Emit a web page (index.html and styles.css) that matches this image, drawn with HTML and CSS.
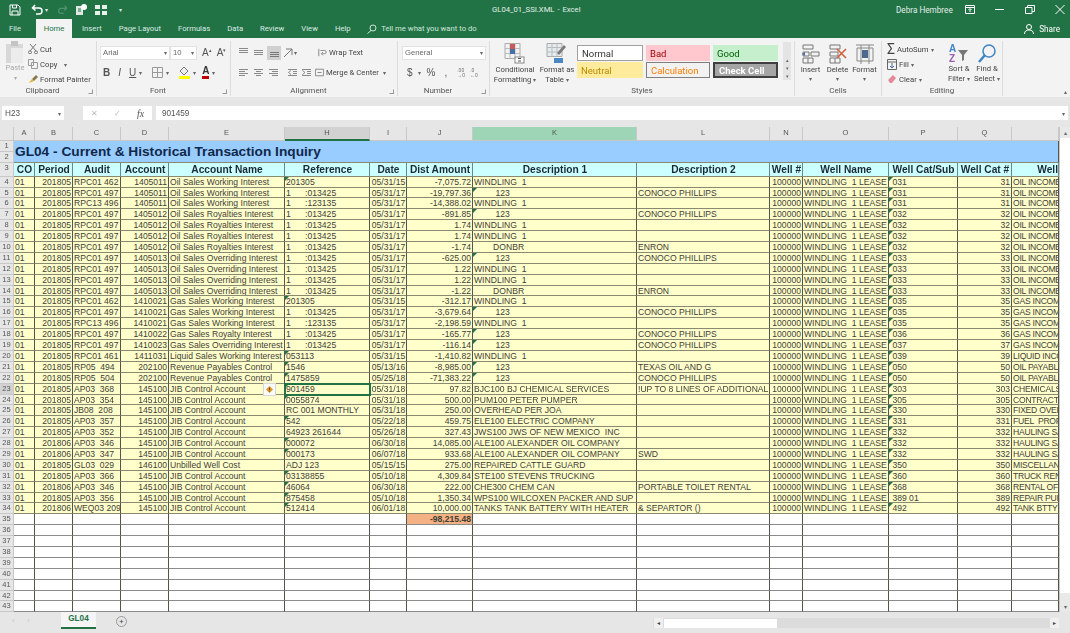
FILE: index.html
```html
<!DOCTYPE html>
<html lang="en">
<head>
    <meta charset="UTF-8">
    <title>GL04_01_SSI.XML - Excel</title>
    <link rel="stylesheet" href="styles.css">
</head>
<body>
<div class="app">

    <!-- Title bar -->
    <header class="titlebar">
        <div class="qat">
            <svg width="12" height="12" viewBox="0 0 12 12" fill="none" stroke="#fff"><path d="M1 1h8l2 2v8H1zM3.500 1v3h4V1M3 11V7h6v4"/></svg>
            <svg class="undo" width="14" height="12" viewBox="0 0 14 12" fill="none" stroke="#fff" stroke-width="1.500"><path d="M4 1L1.500 4 4.500 6.500M2 4h6a3 3 0 0 1 0 6H5"/></svg>
            <span class="caret white">▾</span>
            <svg class="redo" width="12" height="12" viewBox="0 0 14 12" fill="none" stroke="#4f8f6d" stroke-width="1.500"><path d="M10 1l2.500 3-3 2.500M12 4H6a3 3 0 0 0 0 6h3"/></svg>
            <svg class="qat-a" width="13" height="13" viewBox="0 0 13 13"><rect x="1" y="3" width="7" height="9" fill="#dfe9e3"/><circle cx="9" cy="4" r="3" fill="#fff"/><path d="M3 6h3M3 8h3" stroke="#217346"/></svg>
            <svg class="qat-b" width="12" height="10" viewBox="0 0 12 10"><path d="M0 0h5v4H0zM7 0h5v4H7zM0 6h5v4H0zM7 6h5v4H7z" fill="#e8f0eb"/></svg>
            <span class="caret white">▾</span>
        </div>
        <div class="doc-title">GL04_01_SSI.XML - Excel</div>
        <div class="account">Debra Hembree</div>
        <div class="win-controls">
            <svg width="10" height="9" viewBox="0 0 10 9" fill="none" stroke="#fff"><path d="M.5.500h9v8h-9zM.5 2.500h9"/><path d="M5 7V4M3.500 5L5 3.500 6.500 5"/></svg>
            <svg width="10" height="9" viewBox="0 0 10 9" stroke="#fff"><path d="M0 4.500h9"/></svg>
            <svg width="10" height="9" viewBox="0 0 10 9" fill="none" stroke="#fff"><path d="M.5 2.500h6.500v6H.5zM2.500 2.500v-2h7v6H7"/></svg>
            <svg width="10" height="9" viewBox="0 0 10 9" stroke="#fff"><path d="M.5 0l9 9M9.500 0l-9 9"/></svg>
        </div>
    </header>

    <!-- Ribbon tabs -->
    <nav class="tabs">
        <span class="tab file">File</span>
        <span class="tab active">Home</span>
        <span class="tab first">Insert</span>
        <span class="tab">Page Layout</span>
        <span class="tab">Formulas</span>
        <span class="tab">Data</span>
        <span class="tab">Review</span>
        <span class="tab">View</span>
        <span class="tab">Help</span>
        <span class="tell">
            <svg width="10" height="10" viewBox="0 0 10 10" fill="none" stroke="#cfe6d8"><circle cx="6" cy="4" r="3"/><path d="M4 6.500L.5 9.500"/></svg>
            Tell me what you want to do
        </span>
        <span class="share">
            <svg width="11" height="10" viewBox="0 0 11 10" fill="none" stroke="#fff"><circle cx="5" cy="3" r="2.500"/><path d="M.5 10c0-3 2-4 4.500-4s4.500 1 4.500 4"/></svg>
            Share
        </span>
    </nav>

    <!-- Ribbon -->
    <div class="ribbon">
        <section class="group clipboard">
            <div class="group-body">
                <div class="paste">
                    <svg width="20" height="22" viewBox="0 0 20 22"><rect x="1" y="3" width="17" height="19" fill="#d8d8d8"/><rect x="6" y="0" width="7" height="5" fill="#c4c4c4"/><rect x="6" y="7" width="12" height="15" fill="#ececec"/></svg>
                    <span>Paste</span>
                    <span class="caret dim">▾</span>
                </div>
                <div class="small-stack">
                    <div class="small-btn">
                        <svg width="10" height="10" viewBox="0 0 10 10" fill="none" stroke="#777"><path d="M2 0l6 7M8 0L2 7"/><circle cx="2" cy="8.300" r="1.500"/><circle cx="8" cy="8.300" r="1.500"/></svg>
                        Cut
                    </div>
                    <div class="small-btn">
                        <svg width="10" height="10" viewBox="0 0 10 10" fill="none" stroke="#9a9a9a"><path d="M.5.500h5v6h-5zM3.500 3.500h6v6h-6z"/></svg>
                        Copy <span class="caret copy-caret">▾</span>
                    </div>
                    <div class="small-btn">
                        <svg width="10" height="10" viewBox="0 0 10 10"><path d="M4 5l4-4 2 2-4 4z" fill="#8a7a4a"/><path d="M1 9l3-4 2 2z" fill="#e0b030"/></svg>
                        Format Painter
                    </div>
                </div>
            </div>
            <div class="group-label">Clipboard <i class="launcher"></i></div>
        </section>

        <section class="group font">
            <div class="group-body col">
                <div class="tool-row">
                    <span class="select font-name">Arial<span class="caret">▾</span></span>
                    <span class="select font-size">10<span class="caret">▾</span></span>
                    <span class="glyph grow">A<sup>▴</sup></span>
                    <span class="glyph grow">A<sup>▾</sup></span>
                </div>
                <div class="tool-row fmt">
                    <b class="glyph">B</b>
                    <i class="glyph">I</i>
                    <u class="glyph">U</u>
                    <span class="caret">▾</span>
                    <svg class="borders" width="11" height="11" viewBox="0 0 11 11" fill="none" stroke="#999"><path d="M.5.500h10v10H.5zM5.500.500v10M.5 5.500h10"/></svg>
                    <span class="caret">▾</span>
                    <svg class="fill" width="13" height="13" viewBox="0 0 13 13"><path d="M6 1l4 4-4 4-4-4z" fill="#eee" stroke="#777"/><rect x="1" y="10" width="11" height="3" fill="#ffff00"/></svg>
                    <span class="caret">▾</span>
                    <span class="font-color">A</span>
                    <span class="caret">▾</span>
                </div>
            </div>
            <div class="group-label">Font <i class="launcher"></i></div>
        </section>

        <section class="group alignment">
            <div class="group-body col">
                <div class="tool-row">
                    <svg class="al" width="11" height="11" viewBox="0 0 11 11" stroke="#8a8a8a"><path d="M1 1.500h9M1 3.500h9M1 5.500h9"/></svg>
                    <svg class="al" width="11" height="11" viewBox="0 0 11 11" stroke="#8a8a8a"><path d="M1 3.500h9M1 5.500h9M1 7.500h9"/></svg>
                    <span class="al-on"><svg width="11" height="11" viewBox="0 0 11 11" stroke="#777"><path d="M1 5.500h9M1 7.500h9M1 9.500h9"/></svg></span>
                    <svg class="orient" width="11" height="11" viewBox="0 0 11 11" fill="none" stroke="#777"><path d="M1 10L9 2M3 2h6v6"/></svg>
                    <span class="caret">▾</span>
                    <span class="small-btn wrap">
                        <svg width="9" height="11" viewBox="0 0 11 11" fill="none" stroke="#777"><path d="M1 1v9M3 3h5a2 2 0 0 1 0 4H5M6 5L4 7l2 2"/></svg>
                        Wrap Text
                    </span>
                </div>
                <div class="tool-row">
                    <svg class="al" width="11" height="11" viewBox="0 0 11 11" stroke="#8a8a8a"><path d="M1 2.500h9M1 4.500h6M1 6.500h9M1 8.500h6"/></svg>
                    <svg class="al" width="11" height="11" viewBox="0 0 11 11" stroke="#8a8a8a"><path d="M1 2.500h9M3 4.500h5M1 6.500h9M3 8.500h5"/></svg>
                    <svg class="al al-last" width="11" height="11" viewBox="0 0 11 11" stroke="#8a8a8a"><path d="M1 2.500h9M4 4.500h6M1 6.500h9M4 8.500h6"/></svg>
                    <svg class="indent" width="11" height="11" viewBox="0 0 11 11" fill="none" stroke="#8a8a8a"><path d="M1 2.500h9M6 4.500h4M6 6.500h4M1 8.500h9M4 3.500L1.500 5.500 4 7.500" /></svg>
                    <svg class="indent" width="11" height="11" viewBox="0 0 11 11" fill="none" stroke="#8a8a8a"><path d="M1 2.500h9M6 4.500h4M6 6.500h4M1 8.500h9M1.500 3.500L4 5.500 1.500 7.500"/></svg>
                    <span class="small-btn merge">
                        <svg width="9" height="11" viewBox="0 0 11 11" fill="none" stroke="#777"><path d="M.5 1.500h10v8H.5zM3 5.500h5"/></svg>
                        Merge &amp; Center
                    </span>
                    <span class="caret">▾</span>
                </div>
            </div>
            <div class="group-label">Alignment <i class="launcher"></i></div>
        </section>

        <section class="group number">
            <div class="group-body col">
                <div class="tool-row">
                    <span class="select num-format">General<span class="caret">▾</span></span>
                </div>
                <div class="tool-row num-tools">
                    <span class="glyph">$</span><span class="caret">▾</span>
                    <span class="glyph">%</span>
                    <span class="glyph comma">,</span>
                    <span class="dec">.00<br>→0</span>
                    <span class="dec">.0<br>←0</span>
                </div>
            </div>
            <div class="group-label">Number <i class="launcher"></i></div>
        </section>

        <section class="group styles">
            <div class="group-body">
                <div class="big-btn cond">
                    <svg width="22" height="21" viewBox="0 0 22 21" fill="none"><path d="M1 .500h15v15H1z" stroke="#aaa"/><path d="M1 5.500h15M1 10.500h15M6 .500v15M11 .500v15" stroke="#bbb"/><rect x="6" y="1" width="5" height="5" fill="#c65a5a"/><rect x="6" y="6" width="5" height="5" fill="#4a6fa5"/><rect x="11" y="14" width="9" height="6" fill="#fff" stroke="#888"/><path d="M14 15.500h3M14 18h3" stroke="#555"/></svg>
                    <span>Conditional<br>Formatting <span class="caret">▾</span></span>
                </div>
                <div class="big-btn as-table">
                    <svg width="22" height="21" viewBox="0 0 22 21" fill="none"><path d="M1 .500h15v13H1z" stroke="#aaa" fill="#e4ecf2"/><path d="M1 4.500h15M1 9h15M6 .500v13M11 .500v13" stroke="#bbb"/><path d="M20 4l-7 8-2-2 7-8z" fill="#7a7a7a"/><path d="M8 15h9v5H8z" fill="#4a88c5"/></svg>
                    <span>Format as<br>Table <span class="caret">▾</span></span>
                </div>
                <div class="gallery">
                    <span class="cell-style normal">Normal</span>
                    <span class="cell-style bad">Bad</span>
                    <span class="cell-style good">Good</span>
                    <span class="cell-style neutral">Neutral</span>
                    <span class="cell-style calc">Calculation</span>
                    <span class="cell-style check">Check Cell</span>
                </div>
                <div class="gallery-scroll"><span>▴</span><span>▾</span><span>▾</span></div>
            </div>
            <div class="group-label">Styles</div>
        </section>

        <section class="group cells">
            <div class="group-body">
                <div class="big-btn cell-btn">
                    <svg width="20" height="20" viewBox="0 0 20 20" fill="none" stroke="#777"><path d="M2 1h10v4H2zM2 14h10v5H2zM7 14v5M2 8h6v4H2zM10 8h8v4h-8z"/><path d="M1 10l3-2v4z" fill="#4a6fa5" stroke="none"/></svg>
                    <span>Insert</span><span class="caret">▾</span>
                </div>
                <div class="big-btn cell-btn">
                    <svg width="20" height="20" viewBox="0 0 20 20" fill="none" stroke="#777"><path d="M2 1h10v4H2zM2 14h10v5H2zM7 14v5M2 8h8v4H2z"/><path d="M9 5l9 9M18 5l-9 9" stroke="#d2603a" stroke-width="1.600"/></svg>
                    <span>Delete</span><span class="caret">▾</span>
                </div>
                <div class="big-btn cell-btn">
                    <svg width="20" height="20" viewBox="0 0 20 20" fill="none" stroke="#888"><path d="M2 4h16v13H2zM6 1v19M14 1v19M1 1h18"/><rect x="7" y="6" width="6" height="8" fill="#4a6a90" stroke="none"/></svg>
                    <span>Format</span><span class="caret">▾</span>
                </div>
            </div>
            <div class="group-label">Cells</div>
        </section>

        <section class="group editing">
            <div class="group-body">
                <div class="small-stack edit-stack">
                    <div class="small-btn"><span class="sigma">Σ</span> AutoSum <span class="caret">▾</span></div>
                    <div class="small-btn">
                        <svg width="10" height="11" viewBox="0 0 10 11" fill="none" stroke="#666"><path d="M.5.500h9v10h-9zM.5 3h9"/><path d="M5 4v5M3 7l2 2 2-2" stroke="#4a6fa5"/></svg>
                        Fill <span class="caret">▾</span>
                    </div>
                    <div class="small-btn">
                        <svg width="10" height="10" viewBox="0 0 10 10"><path d="M1 6l5-5 3 3-4 5H3z" fill="#e58a9a"/></svg>
                        Clear <span class="caret">▾</span>
                    </div>
                </div>
                <div class="big-btn edit-btn">
                    <svg width="20" height="20" viewBox="0 0 20 20"><path d="M9 7l10 0-4 5v5l-2 1v-6z" fill="#777"/><text x="0" y="9" class="az-a">A</text><text x="0" y="19" class="az-z">Z</text></svg>
                    <span>Sort &amp;<br>Filter <span class="caret">▾</span></span>
                </div>
                <div class="big-btn edit-btn">
                    <svg width="20" height="20" viewBox="0 0 20 20" fill="none" stroke="#3f86c4" stroke-width="1.500"><circle cx="12" cy="8" r="6"/><path d="M8 12l-6 7" stroke-width="2.500"/></svg>
                    <span>Find &amp;<br>Select <span class="caret">▾</span></span>
                </div>
            </div>
            <div class="group-label">Editing</div>
        </section>

        <div class="collapse"><span class="caret">▴</span></div>
    </div>

    <!-- Formula bar -->
    <div class="formula-bar">
        <div class="name-box">H23<span class="caret">▾</span></div>
        <span class="grip"></span>
        <div class="fx-buttons">
            <span class="fx-x">✕</span><span class="fx-x">✓</span><span class="fx">fx</span>
        </div>
        <div class="formula-input">901459<span class="caret">▾</span></div>
    </div>

    <!-- Sheet -->
    <div class="sheet-area">
        <table class="sheet">
            <tr class="cols"><th class="corner"></th><th>A</th><th>B</th><th>C</th><th>D</th><th>E</th><th class="col-sel">H</th><th>I</th><th>J</th><th class="col-green">K</th><th>L</th><th>N</th><th>O</th><th>P</th><th>Q</th><th></th></tr>
            <tr><th class="row-h">1</th><td class="title">GL04 - Current &amp; Historical Transaction Inquiry</td></tr>
            <tr><th class="row-h">2</th></tr>
            <tr class="heads"><th class="row-h">3</th><td>CO</td><td>Period</td><td>Audit</td><td>Account</td><td>Account Name</td><td>Reference</td><td>Date</td><td>Dist Amount</td><td>Description 1</td><td>Description 2</td><td>Well #</td><td>Well Name</td><td>Well Cat/Sub</td><td>Well Cat #</td><td class="r">Well</td></tr>
            <tr class="d"><th>4<td>01<td class=r>201805<td>RPC01 462<td class=r>1405011<td>Oil Sales Working Interest<td class=t>201305<td class=c>05/31/15<td class=r>-7,075.72<td>WINDLING  1<td><td class=r>100000<td>WINDLING  1 LEASE<td class=t> 031<td class=r>31<td>OIL INCOME</tr>
            <tr class="d"><th>5<td>01<td class=r>201805<td>RPC01 497<td class=r>1405011<td>Oil Sales Working Interest<td>1      :013425<td class=c>05/31/17<td class=r>-19,797.36<td class=t>         123<td>CONOCO PHILLIPS<td class=r>100000<td>WINDLING  1 LEASE<td class=t> 031<td class=r>31<td>OIL INCOME</tr>
            <tr class="d"><th>6<td>01<td class=r>201805<td>RPC13 496<td class=r>1405011<td>Oil Sales Working Interest<td>1      :123135<td class=c>05/31/17<td class=r>-14,388.02<td>WINDLING  1<td><td class=r>100000<td>WINDLING  1 LEASE<td class=t> 031<td class=r>31<td>OIL INCOME</tr>
            <tr class="d"><th>7<td>01<td class=r>201805<td>RPC01 497<td class=r>1405012<td>Oil Sales Royalties Interest<td>1      :013425<td class=c>05/31/17<td class=r>-891.85<td class=t>         123<td>CONOCO PHILLIPS<td class=r>100000<td>WINDLING  1 LEASE<td class=t> 032<td class=r>32<td>OIL INCOME</tr>
            <tr class="d"><th>8<td>01<td class=r>201805<td>RPC01 497<td class=r>1405012<td>Oil Sales Royalties Interest<td>1      :013425<td class=c>05/31/17<td class=r>1.74<td>WINDLING  1<td><td class=r>100000<td>WINDLING  1 LEASE<td class=t> 032<td class=r>32<td>OIL INCOME</tr>
            <tr class="d"><th>9<td>01<td class=r>201805<td>RPC01 497<td class=r>1405012<td>Oil Sales Royalties Interest<td>1      :013425<td class=c>05/31/17<td class=r>1.74<td>WINDLING  1<td><td class=r>100000<td>WINDLING  1 LEASE<td class=t> 032<td class=r>32<td>OIL INCOME</tr>
            <tr class="d"><th>10<td>01<td class=r>201805<td>RPC01 497<td class=r>1405012<td>Oil Sales Royalties Interest<td>1      :013425<td class=c>05/31/17<td class=r>-1.74<td>        DONBR<td>ENRON<td class=r>100000<td>WINDLING  1 LEASE<td class=t> 032<td class=r>32<td>OIL INCOME</tr>
            <tr class="d"><th>11<td>01<td class=r>201805<td>RPC01 497<td class=r>1405013<td>Oil Sales Overriding Interest<td>1      :013425<td class=c>05/31/17<td class=r>-625.00<td class=t>         123<td>CONOCO PHILLIPS<td class=r>100000<td>WINDLING  1 LEASE<td class=t> 033<td class=r>33<td>OIL INCOME</tr>
            <tr class="d"><th>12<td>01<td class=r>201805<td>RPC01 497<td class=r>1405013<td>Oil Sales Overriding Interest<td>1      :013425<td class=c>05/31/17<td class=r>1.22<td>WINDLING  1<td><td class=r>100000<td>WINDLING  1 LEASE<td class=t> 033<td class=r>33<td>OIL INCOME</tr>
            <tr class="d"><th>13<td>01<td class=r>201805<td>RPC01 497<td class=r>1405013<td>Oil Sales Overriding Interest<td>1      :013425<td class=c>05/31/17<td class=r>1.22<td>WINDLING  1<td><td class=r>100000<td>WINDLING  1 LEASE<td class=t> 033<td class=r>33<td>OIL INCOME</tr>
            <tr class="d"><th>14<td>01<td class=r>201805<td>RPC01 497<td class=r>1405013<td>Oil Sales Overriding Interest<td>1      :013425<td class=c>05/31/17<td class=r>-1.22<td>        DONBR<td>ENRON<td class=r>100000<td>WINDLING  1 LEASE<td class=t> 033<td class=r>33<td>OIL INCOME</tr>
            <tr class="d"><th>15<td>01<td class=r>201805<td>RPC01 462<td class=r>1410021<td>Gas Sales Working Interest<td class=t>201305<td class=c>05/31/15<td class=r>-312.17<td>WINDLING  1<td><td class=r>100000<td>WINDLING  1 LEASE<td class=t> 035<td class=r>35<td>GAS INCOM</tr>
            <tr class="d"><th>16<td>01<td class=r>201805<td>RPC01 497<td class=r>1410021<td>Gas Sales Working Interest<td>1      :013425<td class=c>05/31/17<td class=r>-3,679.64<td class=t>         123<td>CONOCO PHILLIPS<td class=r>100000<td>WINDLING  1 LEASE<td class=t> 035<td class=r>35<td>GAS INCOM</tr>
            <tr class="d"><th>17<td>01<td class=r>201805<td>RPC13 496<td class=r>1410021<td>Gas Sales Working Interest<td>1      :123135<td class=c>05/31/17<td class=r>-2,198.59<td>WINDLING  1<td><td class=r>100000<td>WINDLING  1 LEASE<td class=t> 035<td class=r>35<td>GAS INCOM</tr>
            <tr class="d"><th>18<td>01<td class=r>201805<td>RPC01 497<td class=r>1410022<td>Gas Sales Royalty Interest<td>1      :013425<td class=c>05/31/17<td class=r>-165.77<td class=t>         123<td>CONOCO PHILLIPS<td class=r>100000<td>WINDLING  1 LEASE<td class=t> 036<td class=r>36<td>GAS INCOM</tr>
            <tr class="d"><th>19<td>01<td class=r>201805<td>RPC01 497<td class=r>1410023<td>Gas Sales Overriding Interest<td>1      :013425<td class=c>05/31/17<td class=r>-116.14<td class=t>         123<td>CONOCO PHILLIPS<td class=r>100000<td>WINDLING  1 LEASE<td class=t> 037<td class=r>37<td>GAS INCOM</tr>
            <tr class="d"><th>20<td>01<td class=r>201805<td>RPC01 461<td class=r>1411031<td>Liquid Sales Working Interest<td class=t>053113<td class=c>05/31/15<td class=r>-1,410.82<td>WINDLING  1<td><td class=r>100000<td>WINDLING  1 LEASE<td class=t> 039<td class=r>39<td>LIQUID INCO</tr>
            <tr class="d"><th>21<td>01<td class=r>201805<td>RP05  494<td class=r>202100<td>Revenue Payables Control<td class=t>1546<td class=c>05/13/16<td class=r>-8,985.00<td class=t>         123<td>TEXAS OIL AND G<td class=r>100000<td>WINDLING  1 LEASE<td class=t> 050<td class=r>50<td>OIL PAYABL</tr>
            <tr class="d"><th>22<td>01<td class=r>201805<td>RP05  504<td class=r>202100<td>Revenue Payables Control<td class=t>1475859<td class=c>05/25/18<td class=r>-71,383.22<td class=t>         123<td>CONOCO PHILLIPS<td class=r>100000<td>WINDLING  1 LEASE<td class=t> 050<td class=r>50<td>OIL PAYABL</tr>
            <tr class="d sel-row"><th>23<td>01<td class=r>201805<td>AP03  368<td class=r>145100<td class=warn-cell>JIB Control Account<span class="warn"><svg width="7" height="7" viewBox="0 0 7 7"><path d="M3.500 0L7 3.500 3.500 7 0 3.500z" fill="#d99a2b"/><path d="M3.500 1.500v2.500M3.500 4.800v.8" stroke="#7a4a10"/></svg></span><td class="t selected">901459<td class=c>05/31/18<td class=r>97.82<td>BJC100 BJ CHEMICAL SERVICES<td>!UP TO 8 LINES OF ADDITIONAL<td class=r>100000<td>WINDLING  1 LEASE<td class=t> 303<td class=r>303<td>CHEMICALS</tr>
            <tr class="d"><th>24<td>01<td class=r>201805<td>AP03  354<td class=r>145100<td>JIB Control Account<td class=t>0055874<td class=c>05/31/18<td class=r>500.00<td>PUM100 PETER PUMPER<td><td class=r>100000<td>WINDLING  1 LEASE<td class=t> 305<td class=r>305<td>CONTRACT</tr>
            <tr class="d"><th>25<td>01<td class=r>201805<td>JB08  208<td class=r>145100<td>JIB Control Account<td>RC 001 MONTHLY<td class=c>05/31/18<td class=r>250.00<td>OVERHEAD PER JOA<td><td class=r>100000<td>WINDLING  1 LEASE<td class=t> 330<td class=r>330<td>FIXED OVER</tr>
            <tr class="d"><th>26<td>01<td class=r>201805<td>AP03  357<td class=r>145100<td>JIB Control Account<td class=t>542<td class=c>05/22/18<td class=r>459.75<td>ELE100 ELECTRIC COMPANY<td><td class=r>100000<td>WINDLING  1 LEASE<td class=t> 331<td class=r>331<td>FUEL  PROF</tr>
            <tr class="d"><th>27<td>01<td class=r>201805<td>AP03  352<td class=r>145100<td>JIB Control Account<td>64923 261644<td class=c>05/26/18<td class=r>327.43<td>JWS100 JWS OF NEW MEXICO  INC<td><td class=r>100000<td>WINDLING  1 LEASE<td class=t> 332<td class=r>332<td>HAULING SA</tr>
            <tr class="d"><th>28<td>01<td class=r>201806<td>AP03  346<td class=r>145100<td>JIB Control Account<td class=t>000072<td class=c>06/30/18<td class=r>14,085.00<td>ALE100 ALEXANDER OIL COMPANY<td><td class=r>100000<td>WINDLING  1 LEASE<td class=t> 332<td class=r>332<td>HAULING SA</tr>
            <tr class="d"><th>29<td>01<td class=r>201806<td>AP03  347<td class=r>145100<td>JIB Control Account<td class=t>000173<td class=c>06/07/18<td class=r>933.68<td>ALE100 ALEXANDER OIL COMPANY<td>SWD<td class=r>100000<td>WINDLING  1 LEASE<td class=t> 332<td class=r>332<td>HAULING SA</tr>
            <tr class="d"><th>30<td>01<td class=r>201805<td>GL03  029<td class=r>146100<td>Unbilled Well Cost<td>ADJ 123<td class=c>05/15/15<td class=r>275.00<td>REPAIRED CATTLE GUARD<td><td class=r>100000<td>WINDLING  1 LEASE<td class=t> 350<td class=r>350<td>MISCELLAN</tr>
            <tr class="d"><th>31<td>01<td class=r>201805<td>AP03  366<td class=r>145100<td>JIB Control Account<td class=t>03138855<td class=c>05/10/18<td class=r>4,309.84<td>STE100 STEVENS TRUCKING<td><td class=r>100000<td>WINDLING  1 LEASE<td class=t> 360<td class=r>360<td>TRUCK REN</tr>
            <tr class="d"><th>32<td>01<td class=r>201806<td>AP03  346<td class=r>145100<td>JIB Control Account<td class=t>46064<td class=c>06/30/18<td class=r>222.00<td>CHE300 CHEM CAN<td>PORTABLE TOILET RENTAL<td class=r>100000<td>WINDLING  1 LEASE<td class=t> 368<td class=r>368<td>RENTAL OF</tr>
            <tr class="d"><th>33<td>01<td class=r>201805<td>AP03  356<td class=r>145100<td>JIB Control Account<td class=t>875458<td class=c>05/10/18<td class=r>1,350.34<td>WPS100 WILCOXEN PACKER AND SUP<td><td class=r>100000<td>WINDLING  1 LEASE<td> 389 01<td class=r>389<td>REPAIR PUI</tr>
            <tr class="d"><th>34<td>01<td class=r>201806<td>WEQ03 209<td class=r>145100<td>JIB Control Account<td class=t>512414<td class=c>06/01/18<td class=r>10,000.00<td>TANKS TANK BATTERY WITH HEATER<td>&amp; SEPARTOR ()<td class=r>100000<td>WINDLING  1 LEASE<td class=t> 492<td class=r>492<td>TANK BTTY</tr>
            <tr class="e"><th>35<td><td><td><td><td><td><td><td class="total r">-98,215.48<td><td><td><td><td><td><td></tr>
            <tr class="e"><th>36<td><td><td><td><td><td><td><td><td><td><td><td><td><td><td></tr>
            <tr class="e"><th>37<td><td><td><td><td><td><td><td><td><td><td><td><td><td><td></tr>
            <tr class="e"><th>38<td><td><td><td><td><td><td><td><td><td><td><td><td><td><td></tr>
            <tr class="e"><th>39<td><td><td><td><td><td><td><td><td><td><td><td><td><td><td></tr>
            <tr class="e"><th>40<td><td><td><td><td><td><td><td><td><td><td><td><td><td><td></tr>
            <tr class="e"><th>41<td><td><td><td><td><td><td><td><td><td><td><td><td><td><td></tr>
            <tr class="e"><th>42<td><td><td><td><td><td><td><td><td><td><td><td><td><td><td></tr>
            <tr class="e"><th>43<td><td><td><td><td><td><td><td><td><td><td><td><td><td><td></tr>
        </table>
        <div class="v-scroll">
            <span class="caret">▴</span>
            <div class="v-thumb"></div>
            <span class="caret">▾</span>
        </div>
    </div>

    <!-- Sheet tabs -->
    <footer class="sheet-tabs">
        <span class="nav-arrows"><span>‹</span><span>›</span></span>
        <span class="sheet-tab">GL04</span>
        <span class="add-sheet">+</span>
        <div class="h-scroll">
            <span class="arrow">◂</span>
            <span class="h-thumb"></span>
            <span class="arrow end">▸</span>
        </div>
    </footer>
</div>
</body>
</html>
```

FILE: styles.css
```css
* {
    box-sizing: border-box;
}

body {
    margin: 0;
    font-family: Roboto, "Open Sans", sans-serif;
    font-size: 7.700px;
    color: #444;
    background: #e6e6e6;
}

.app {
    width: 1070px;
    height: 633px;
    overflow: hidden;
    display: flex;
    flex-direction: column;
    filter: blur(.35px);
}

.caret {
    font-size: 6px;
    color: #666;
}

.caret.white {
    color: #dfe9e3;
}

.caret.dim {
    color: #aaa;
}

/* Title bar */
.titlebar {
    height: 19px;
    flex: none;
    background: #217346;
    color: #e3eee8;
    display: flex;
    align-items: center;
}

.qat {
    display: flex;
    align-items: center;
    padding-left: 9px;
    width: 300px;
}

.undo {
    margin-left: 10px;
}

.redo {
    margin-left: 8px;
}

.qat-a {
    margin-left: 7px;
}

.qat-b {
    margin-left: 7px;
}

.qat .caret:last-child {
    margin-left: 12px;
}

.doc-title {
    margin-left: 192px;
    width: 404px;
    white-space: nowrap;
    word-spacing: 1px;
}

.account {
    width: 69px;
    white-space: nowrap;
    font-size: 8.200px;
}

.win-controls {
    display: flex;
    align-items: center;
    gap: 20px;
}

/* Tabs */
.tabs {
    height: 19px;
    flex: none;
    background: #217346;
    color: #dcebe3;
    display: flex;
    align-items: stretch;
}

.tab {
    display: flex;
    align-items: center;
    padding: 0 8.500px;
    white-space: nowrap;
}

.tab.file {
    padding: 0 0 0 9px;
    width: 36px;
}

.tab.active {
    background: #f3f3f3;
    color: #217346;
    width: 36px;
    justify-content: center;
    padding: 0;
}

.tab.first {
    margin-left: 1.500px;
}

.tell {
    display: flex;
    align-items: center;
    gap: 4px;
    margin-left: 8px;
    color: #cfe6d8;
}

.share {
    display: flex;
    align-items: center;
    gap: 4px;
    margin-left: auto;
    padding-right: 10px;
    color: #fff;
    font-size: 8.200px;
}

/* Ribbon */
.ribbon {
    height: 59px;
    flex: none;
    background: #f3f3f3;
    display: flex;
    position: relative;
    padding-top: 3px;
}

.group {
    display: flex;
    flex-direction: column;
    border-right: 1px solid #dcdcdc;
    height: 55px;
    flex: none;
}

.group-body {
    flex: none;
    height: 45px;
    display: flex;
    align-items: flex-start;
}

.group-body.col {
    flex-direction: column;
    padding-top: 4px;
    gap: 5px;
}

.group-label {
    height: 10px;
    line-height: 10px;
    font-size: 8px;
    text-align: center;
    color: #555;
    position: relative;
}

.clipboard .group-label,
.font .group-label,
.alignment .group-label,
.number .group-label {
    padding-right: 11px;
}

.launcher {
    position: absolute;
    right: 3px;
    top: 3px;
    width: 5px;
    height: 5px;
    border: 1px solid #999;
    border-top-color: transparent;
    border-left-color: transparent;
}

.clipboard {
    width: 97px;
}

.font {
    width: 134px;
}

.alignment {
    width: 167px;
}

.number {
    width: 92px;
}

.styles {
    width: 305px;
}

.cells {
    width: 87px;
}

.editing {
    width: 121px;
}

.paste {
    width: 26px;
    margin-left: 2px;
    display: flex;
    flex-direction: column;
    align-items: center;
    color: #aaa;
    font-size: 7.500px;
    line-height: 10px;
}

.small-stack {
    display: flex;
    flex-direction: column;
    gap: 3px;
    padding-top: 2px;
}

.small-btn {
    display: flex;
    align-items: center;
    gap: 2px;
    height: 12px;
    white-space: nowrap;
}

.copy-caret {
    margin-left: 5px;
}

.tool-row {
    display: flex;
    align-items: center;
    height: 15px;
    padding-left: 3px;
}

.select {
    background: #fff;
    border: 1px solid #e2e2e2;
    height: 14px;
    display: flex;
    align-items: center;
    justify-content: space-between;
    padding: 0 2px;
    color: #666;
    font-family: "Liberation Sans", sans-serif;
}

.font-name {
    width: 70px;
}

.font-size {
    width: 27px;
    margin-right: 5px;
}

.glyph {
    font-family: "Liberation Sans", sans-serif;
    font-size: 10px;
    color: #555;
}

.grow {
    margin-right: 5px;
    font-size: 10px;
}

.grow sup {
    font-size: 5px;
}

.fmt {
    padding-left: 6px;
}

.fmt .glyph {
    margin-right: 8px;
}

.fmt u {
    margin-right: 3px !important;
}

.borders {
    margin-left: 10px;
    margin-right: 3px;
}

.fill {
    margin-left: 9px;
    margin-right: 2px;
}

.font-color {
    margin-left: 6px;
    margin-right: 3px;
    font: bold 10px/10px "Liberation Sans", sans-serif;
    color: #333;
    border-bottom: 3px solid #c00000;
}

.al {
    margin: 0 2px;
}

.al-on {
    display: flex;
    align-items: center;
    justify-content: center;
    width: 14px;
    height: 14px;
    background: #d0d0d0;
    margin-left: 1px;
}

.orient {
    margin-left: 2px;
}

.wrap {
    margin-left: 21px;
}

.al-last {
    margin-right: 8px;
}

.indent {
    margin-right: 3px;
}

.merge {
    margin-left: 0;
    margin-right: 4px;
}

.alignment .tool-row {
    padding-left: 5px;
}

.num-format {
    width: 84px;
    margin-left: 1px;
}

.num-tools {
    padding-left: 9px;
}

.num-tools .glyph {
    margin-right: 5px;
}

.num-tools .caret {
    margin-right: 6px;
}

.comma {
    margin-left: 4px;
}

.dec {
    font-size: 5px;
    line-height: 5px;
    margin-left: 5px;
    color: #777;
}

.big-btn {
    display: flex;
    flex-direction: column;
    align-items: center;
    text-align: center;
    line-height: 10px;
    flex: none;
    padding-top: 2px;
}

.big-btn span:not(.caret) {
    margin-top: 1px;
}

.cond {
    margin-left: 3px;
    width: 44px;
}

.as-table {
    width: 40px;
}

.gallery {
    display: grid;
    grid-template-columns: 66px 64px 65px;
    grid-template-rows: 16px 16px;
    gap: 1px 3px;
    margin-top: 4px;
}

.cell-style {
    display: flex;
    align-items: center;
    padding-left: 4px;
    font-size: 9.500px;
}

.normal {
    background: #fff;
    border: 1px solid #a0a0a0;
    color: #333;
}

.bad {
    background: #ffc7ce;
    color: #9c0006;
}

.good {
    background: #c6efce;
    color: #006100;
}

.neutral {
    background: #ffeb9c;
    color: #b88a00;
}

.calc {
    background: #f2f2f2;
    border: 1px solid #7f7f7f;
    color: #fa7d00;
}

.check {
    background: #a5a5a5;
    border: 2px double #3f3f3f;
    color: #fff;
    font-weight: 700;
}

.gallery-scroll {
    margin: 1px 0 0 5px;
    width: 8px;
    height: 38px;
    display: flex;
    flex-direction: column;
    align-items: center;
    justify-content: flex-end;
    font-size: 5px;
    line-height: 8px;
    background: #e4e4e4;
    color: #666;
}

.cell-btn {
    width: 27px;
}

.cells .group-body {
    padding: 1px 0 0 2px;
}

.cell-btn .caret {
    line-height: 8px;
}

.editing .group-body {
    padding-left: 5px;
}

.edit-stack {
    width: 58px;
}

.sigma {
    font-size: 14px;
    color: #444;
    line-height: 12px;
}

.edit-btn {
    width: 28px;
}

.az-a,
.az-z {
    font: bold 10px "Liberation Sans", sans-serif;
}

.az-a {
    fill: #3f86c4;
}

.az-z {
    fill: #9a5fb0;
}

.collapse {
    position: absolute;
    right: 3px;
    bottom: 1px;
}

/* Formula bar */
.formula-bar {
    height: 30px;
    flex: none;
    background: #e6e6e6;
    display: flex;
    padding: 9px 2px 7px 2px;
    font-family: "Liberation Sans", sans-serif;
    font-size: 8.200px;
    color: #555;
}

.name-box {
    width: 62px;
    background: #fff;
    display: flex;
    align-items: center;
    justify-content: space-between;
    padding: 0 3px;
}

.grip {
    width: 19px;
}

.fx-buttons {
    width: 69px;
    background: #fff;
    display: flex;
    align-items: center;
    gap: 16px;
    padding-left: 8px;
    color: #bbb;
    margin-right: 4px;
}

.fx {
    font: italic 10px "Liberation Serif", serif;
    color: #555;
}

.formula-input {
    flex: 1;
    background: #fff;
    display: flex;
    align-items: center;
    justify-content: space-between;
    padding: 0 3px 0 6px;
}

/* Sheet grid */
.sheet-area {
    height: 485px;
    flex: none;
    display: flex;
    background: #fff;
}

.sheet {
    flex: none;
    width: 1059px;
    display: grid;
    grid-template-columns: 14px 21px 38px 48px 48px 116px 85px 37px 66px 164px 133px 33px 86px 69px 54px 47px;
    grid-template-rows: 14px 11px 11px 13.700px;
    grid-auto-rows: 10.900px;
    font-family: "Liberation Sans", sans-serif;
    font-size: 8.600px;
    border-spacing: 0;
    color: #3f4035;
}

.sheet tbody,
.sheet tr {
    display: contents;
}

.sheet th,
.sheet td {
    display: block;
    padding: 0;
    overflow: hidden;
    white-space: pre;
}

.sheet td {
    padding-left: 1px;
    line-height: 10px;
    border-right: 1px solid #55554a;
    border-bottom: 1px solid #8a8a70;
    position: relative;
}

.sheet th {
    font-weight: 400;
    background: #e6e6e6;
    color: #555;
    border-right: 1px solid #c8c8c8;
    border-bottom: 1px solid #c8c8c8;
    text-align: center;
    line-height: 12px;
    font-size: 7.500px;
}

.sheet th.corner {
    background: #e6e6e6;
}

.sheet th.col-sel {
    background: #d2d2d2;
    border-bottom: 2px solid #217346;
}

.sheet th.col-green {
    background: #9fd5b7;
}

.sheet tr.d th,
.sheet tr.e th,
.sheet th.row-h {
    line-height: 10px;
    font-size: 7.500px;
}

.sheet td.title {
    grid-column: 2 / -1;
    grid-row: 2 / span 2;
    background: #99ccff;
    font-size: 13.700px;
    font-weight: 700;
    line-height: 21px;
    color: #10284a;
    padding-left: 1px;
}

.sheet tr:nth-child(3) th {
    grid-column: 1;
    grid-row: 3;
}

.heads td {
    background: #ccffff;
    font-size: 10.200px;
    font-weight: 700;
    line-height: 13px;
    text-align: center;
    color: #1a2a35;
    border-right-color: #6a8a8a;
}

.heads td.r {
    text-align: right;
}

.d td {
    background: #ffffcc;
}

.d td:last-child {
    letter-spacing: -.25px;
}

.d td.r,
.e td.r {
    text-align: right;
    padding-right: 1px;
}

.d td.c {
    text-align: center;
}

.e td {
    background: #fff;
    border-bottom-color: #8a8a8a;
}

.t::before {
    content: "";
    position: absolute;
    left: 0;
    top: 0;
    border-top: 4px solid #217346;
    border-right: 4px solid transparent;
}

.sheet .sel-row th {
    background: #d2d2d2;
}

.sheet .warn-cell {
    overflow: visible;
    z-index: 1;
}

.warn {
    position: absolute;
    right: 8px;
    top: -1px;
    width: 13px;
    height: 13px;
    background: #fafafa;
    border: 1px solid #d8d8d8;
    display: flex;
    align-items: center;
    justify-content: center;
}

.sheet td.selected {
    outline: 2px solid #217346;
    outline-offset: -1px;
    overflow: visible;
    z-index: 2;
}

.sheet td.total {
    background: #f4b183;
    font-weight: 700;
}

.v-scroll {
    flex: 1;
    display: flex;
    flex-direction: column;
    align-items: center;
    background: #e9e9e9;
    border-left: 1px solid #c8c8c8;
    line-height: 11px;
}

.v-thumb {
    flex: 1;
    width: 100%;
    background: #fff;
    margin-bottom: 8px;
}

/* Sheet tabs + horizontal scroll */
.sheet-tabs {
    flex: 1;
    background: #e6e6e6;
    display: flex;
    align-items: flex-start;
}

.nav-arrows {
    display: flex;
    gap: 13px;
    padding: 4px 0 0 12px;
    width: 61px;
    color: #bbb;
}

.sheet-tab {
    width: 35px;
    height: 17px;
    background: #f5f5f5;
    border-bottom: 2px solid #217346;
    color: #217346;
    font-family: "Liberation Sans", sans-serif;
    font-size: 8.200px;
    font-weight: 700;
    text-align: center;
    line-height: 14px;
}

.add-sheet {
    width: 11px;
    height: 11px;
    margin: 4px 0 0 20px;
    border: 1px solid #999;
    border-radius: 50%;
    text-align: center;
    line-height: 9px;
}

.h-scroll {
    margin: 6px 11px 0 auto;
    width: 406px;
    height: 10px;
    background: #dcdcdc;
    display: flex;
    align-items: center;
    font-size: 6px;
    padding-left: 1px;
}

.h-thumb {
    width: 113px;
    height: 9px;
    margin-left: 1px;
    background: #fff;
}

.arrow {
    width: 9px;
    height: 10px;
    background: #f0f0f0;
    text-align: center;
    line-height: 10px;
}

.arrow.end {
    margin-left: auto;
}
```
